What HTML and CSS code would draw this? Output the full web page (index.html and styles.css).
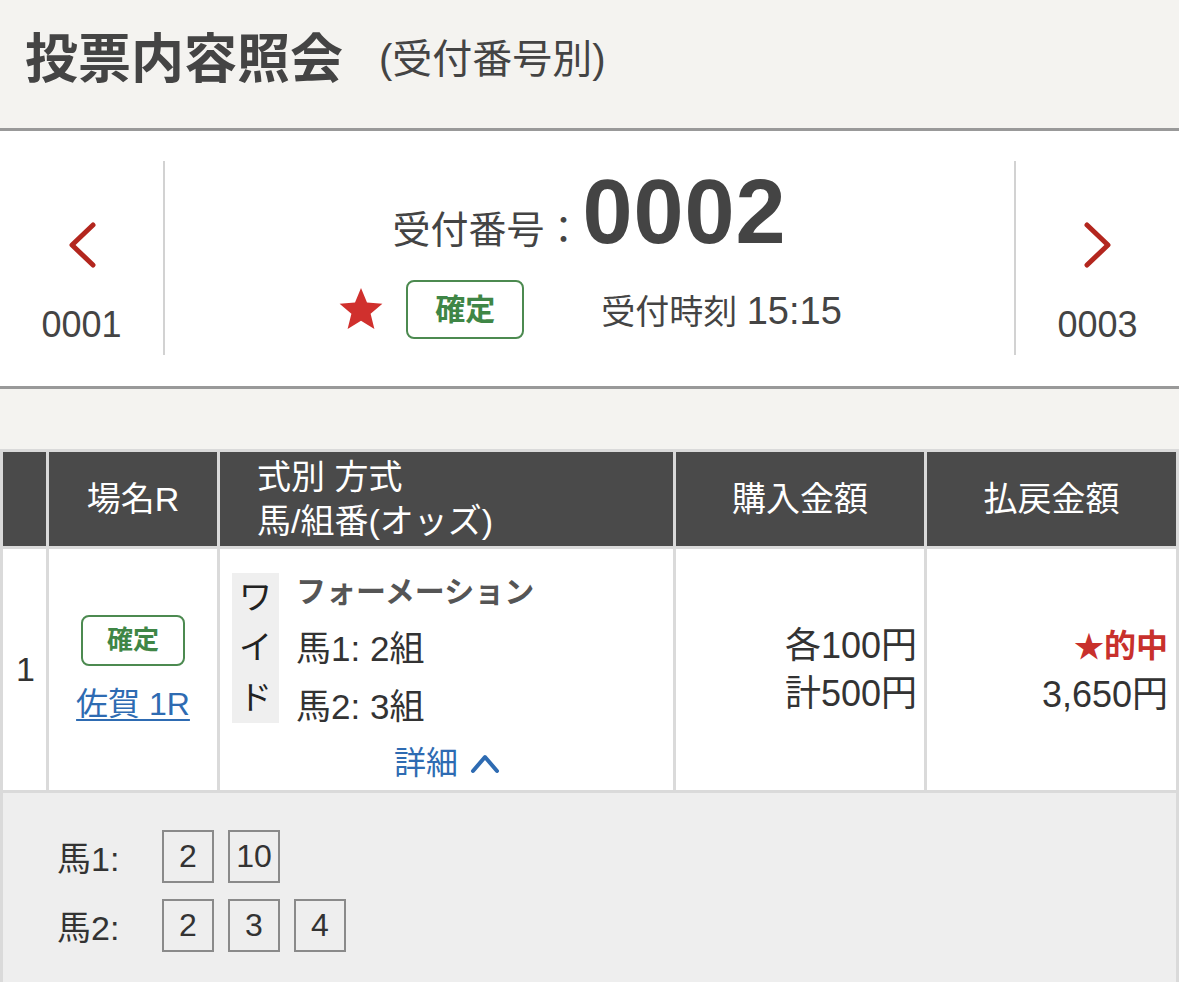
FILE: index.html
```html
<!DOCTYPE html>
<html lang="ja">
<head>
  <meta charset="UTF-8" />
  <meta name="viewport" content="width=device-width, initial-scale=1.0" />
  <title>投票内容照会</title>
  <link rel="stylesheet" href="styles.css">
</head>
<body>
  <header class="page-head">
    <h1>投票内容照会</h1>
    <span class="sub">(受付番号別)</span>
  </header>

  <!-- 受付番号ナビ -->
  <section class="receipt-nav">
    <a class="nav-side prev" href="#">
      <svg class="chev" width="32" height="48" viewBox="0 0 32 48"><polyline points="27,4 6,24 27,44" /></svg>
      <span class="nav-num">0001</span>
    </a>
    <div class="nav-main">
      <div class="num-line"><span class="num-label">受付番号：</span><span class="num">0002</span></div>
      <div class="status-line">
        <svg class="star" width="48" height="46" viewBox="0 0 24 23"><path d="M12 0.5l3 7.3 7.7.6-5.9 5 1.9 7.6L12 16.9 5.3 21l1.9-7.6-5.9-5 7.7-.6z" /></svg>
        <span class="badge">確定</span>
        <span class="time">受付時刻 <span class="time-val">15:15</span></span>
      </div>
    </div>
    <a class="nav-side next" href="#">
      <svg class="chev" width="32" height="48" viewBox="0 0 32 48"><polyline points="5,4 26,24 5,44" /></svg>
      <span class="nav-num">0003</span>
    </a>
  </section>

  <table class="bets">
    <colgroup>
      <col style="width:43px"><col style="width:168px"><col style="width:453px"><col style="width:248px"><col style="width:249px">
    </colgroup>
    <thead>
      <tr>
        <th></th>
        <th>場名R</th>
        <th class="left">式別 方式<br>馬/組番(オッズ)</th>
        <th>購入金額</th>
        <th>払戻金額</th>
      </tr>
    </thead>
    <tbody>
      <tr class="bet-row">
        <td class="idx">1</td>
        <td class="place">
          <span class="badge small">確定</span>
          <a class="race-link" href="#">佐賀 1R</a>
        </td>
        <td class="kind">
          <div class="kind-wrap">
            <div class="kind-box"><span>ワ</span><span>イ</span><span>ド</span></div>
            <div class="kind-info">
              <div class="method">フォーメーション</div>
              <div class="pick">馬1: 2組</div>
              <div class="pick">馬2: 3組</div>
            </div>
          </div>
          <a class="detail-link" href="#">詳細 <svg width="30" height="22" viewBox="0 0 30 22"><polyline points="3,19 15,5 27,19" /></svg></a>
        </td>
        <td class="money">各100円<br>計500円</td>
        <td class="money pay"><span class="hit"><span class="hit-star">★</span>的中</span><br>3,650円</td>
      </tr>
      <tr class="detail-row">
        <td colspan="5">
          <div class="combo"><span class="combo-label">馬1:</span><span class="box">2</span><span class="box">10</span></div>
          <div class="combo"><span class="combo-label">馬2:</span><span class="box">2</span><span class="box">3</span><span class="box">4</span></div>
        </td>
      </tr>
    </tbody>
  </table>
</body>
</html>
```

FILE: styles.css
```css
body {
  margin: 0;
  font-family: "Liberation Sans", "Noto Sans CJK JP", sans-serif;
  color: #333;
  background: #f4f3f0;
}
a {
  text-decoration: none;
}
.page-head {
  height: 131px;
  display: flex;
  align-items: center;
  padding: 0 0 10px 25px;
  box-sizing: border-box;
  border-bottom: 3px solid #999;
  color: #444;
}
.page-head h1 {
  margin: 0;
  font-size: 53px;
  line-height: 1;
  font-weight: 700;
}
.page-head .sub {
  margin-left: 36px;
  font-size: 40px;
  line-height: 1;
}
.receipt-nav {
  display: flex;
  background: #fff;
  padding: 30px 0 31px;
  border-bottom: 3px solid #999;
}
.nav-side {
  width: 165px;
  height: 194px;
  box-sizing: border-box;
  padding-top: 60px;
  display: flex;
  flex-direction: column;
  align-items: center;
  color: #444;
}
.nav-side.prev {
  border-right: 2px solid #d2d2d2;
}
.nav-side.next {
  border-left: 2px solid #d2d2d2;
}
.chev polyline {
  fill: none;
  stroke: #b3261e;
  stroke-width: 5;
  stroke-linecap: round;
  stroke-linejoin: round;
}
.nav-num {
  margin-top: 36px;
  font-size: 36px;
  line-height: 40px;
}
.nav-main {
  flex: 1;
  display: flex;
  flex-direction: column;
  align-items: center;
  color: #444;
}
.num-line {
  margin-top: 7px;
  line-height: 88px;
  height: 88px;
}
.num-label {
  font-size: 38px;
}
.num {
  font-size: 90px;
  font-weight: 700;
  letter-spacing: 1px;
}
.status-line {
  margin-top: 24px;
  display: flex;
  align-items: center;
}
.star path {
  fill: #d0302d;
}
.star {
  margin-right: 21px;
}
.badge {
  display: inline-block;
  border: 2px solid #4c8a50;
  border-radius: 8px;
  color: #3f8646;
  font-weight: 700;
  font-size: 30px;
  line-height: 55px;
  padding: 0 27px;
}
.time {
  margin-left: 77px;
  font-size: 34px;
}
.time-val {
  font-size: 38px;
}
.bets {
  margin-top: 60px;
  width: 100%;
  table-layout: fixed;
  border-collapse: separate;
  border-spacing: 3px;
  background: #dadada;
}
.bets th {
  background: #4a4a4a;
  color: #fff;
  font-weight: 400;
  font-size: 34px;
  line-height: 44px;
  height: 94px;
  padding: 0;
}
.bets th.left {
  text-align: left;
  padding-left: 37px;
}
.bets td {
  background: #fff;
  padding: 0;
  vertical-align: middle;
}
.bet-row {
  height: 241px;
}
.idx {
  font-size: 34px;
  padding-left: 13px !important;
}
.place {
  text-align: center;
}
.badge.small {
  font-size: 26px;
  line-height: 47px;
  padding: 0 24px;
}
.race-link {
  display: block;
  margin-top: 18px;
  font-size: 32px;
  line-height: 40px;
  color: #2e6bb2;
  text-decoration: underline;
  text-underline-offset: 4px;
  text-decoration-thickness: 2px;
}
.kind {
  padding: 24px 11px 9px 12px !important;
  vertical-align: top !important;
}
.kind-wrap {
  display: flex;
  align-items: flex-start;
}
.kind-box {
  width: 47px;
  background: #efefef;
  display: flex;
  flex-direction: column;
  align-items: center;
  font-size: 33px;
  line-height: 50px;
  color: #222;
}
.kind-info {
  margin-left: 17px;
}
.method {
  font-size: 30px;
  font-weight: 700;
  color: #555;
  line-height: 38px;
  margin-bottom: 9px;
}
.pick {
  font-size: 35px;
  line-height: 58px;
}
.detail-link {
  display: flex;
  align-items: center;
  justify-content: center;
  gap: 12px;
  margin-top: 9px;
  font-size: 32px;
  line-height: 36px;
  color: #2e6bb2;
}
.detail-link polyline {
  fill: none;
  stroke: #2e6bb2;
  stroke-width: 4;
  stroke-linecap: round;
  stroke-linejoin: round;
}
.money {
  text-align: right;
  padding-right: 7px !important;
  font-size: 36px;
  line-height: 48px;
}
.money.pay {
  padding-right: 8px !important;
}
.hit {
  color: #c8302c;
  font-weight: 700;
  font-size: 32px;
}
.hit-star {
  font-size: 30px;
}
.detail-row td {
  background: #eee;
  padding: 37px 54px 40px !important;
}
.combo {
  display: flex;
  align-items: center;
  gap: 14px;
}
.combo + .combo {
  margin-top: 16px;
}
.combo-label {
  width: 91px;
  font-size: 34px;
}
.box {
  width: 48px;
  height: 49px;
  border: 2px solid #8a8a8a;
  display: flex;
  align-items: center;
  justify-content: center;
  font-size: 32px;
}
```
